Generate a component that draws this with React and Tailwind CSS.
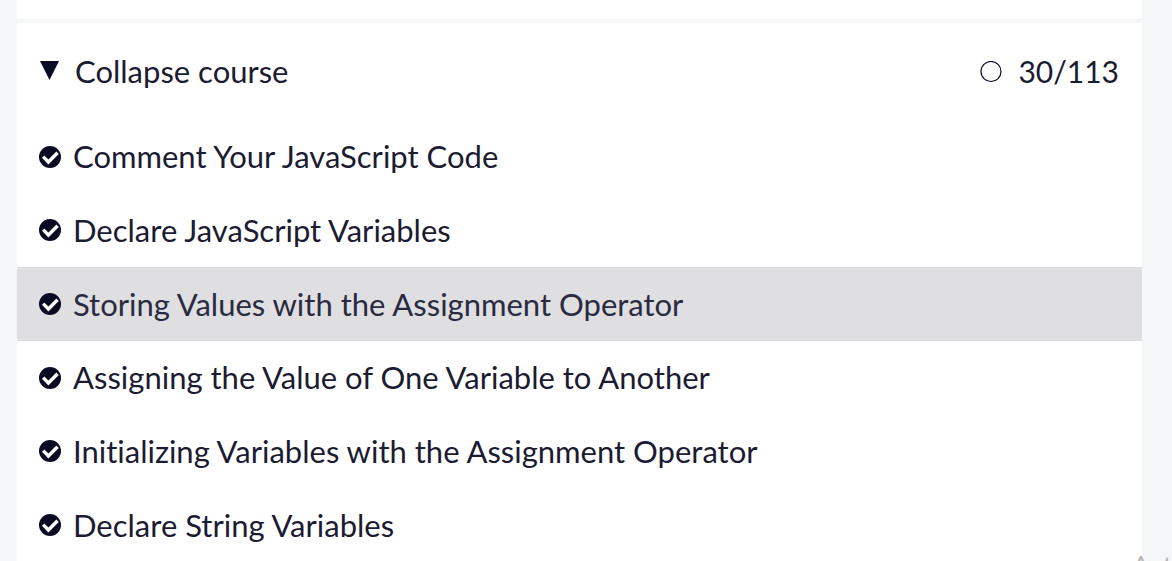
const lessons = [
  "Comment Your JavaScript Code",
  "Declare JavaScript Variables",
  "Storing Values with the Assignment Operator",
  "Assigning the Value of One Variable to Another",
  "Initializing Variables with the Assignment Operator",
  "Declare String Variables",
];

function CheckIcon() {
  return (
    <svg viewBox="0 0 22 22" className="size-[22px] shrink-0" aria-hidden="true">
      <circle cx="11" cy="11" r="11" fill="#0a0a23" />
      <path d="M4.2 10.6L9.4 16L18.6 6.8" fill="none" stroke="#fff" strokeWidth="3.4" />
    </svg>
  );
}

export default function App() {
  return (
    <div className="relative h-screen overflow-hidden bg-[#f5f6f7] pr-[30px] pl-[17px] font-['Lato',sans-serif] text-[31px] leading-[37px] text-[#1b1b32] [font-variant-ligatures:none]">
      <div className="h-[19px] bg-white" />
      <main className="mt-1 bg-white pt-[21px]">
        <button type="button" className="flex w-full items-center px-[23px] py-[9px] text-left">
          <svg viewBox="0 0 19 22" className="h-[22px] w-[19px] shrink-0" aria-hidden="true">
            <path d="M0 0H19L9.5 19Z" fill="#0a0a23" />
          </svg>
          <span className="ml-4">Collapse course</span>
          <svg viewBox="0 0 22 22" className="ml-auto size-[22px]" aria-hidden="true">
            <circle cx="11" cy="10.5" r="10" fill="none" stroke="#0a0a23" strokeWidth="1.2" />
          </svg>
          <span className="ml-4 text-[30px]">30/113</span>
        </button>
        <ul className="mt-[21px] grid min-h-[442px] auto-rows-fr">
          {lessons.map((title, i) => (
            <li key={title} className={i === 2 ? "grid bg-[#dfdfe2] text-[#2a2a40]" : "grid"}>
              <a href="#lesson" className="flex items-center gap-3 px-[22px]">
                <CheckIcon />
                {title}
              </a>
            </li>
          ))}
        </ul>
      </main>
      <p className="absolute top-[551px] left-[1132px] font-['Open_Sans',sans-serif] text-[28px] leading-7 whitespace-nowrap text-[#b4b4b4]">
        Activate Windows
      </p>
    </div>
  );
}
